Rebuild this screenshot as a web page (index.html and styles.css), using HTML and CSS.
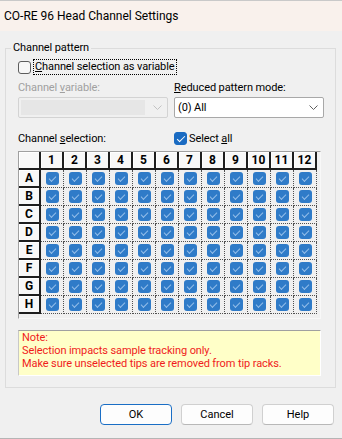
FILE: index.html
```html
<!DOCTYPE html>
<html lang="en">
<head>
    <meta charset="UTF-8">
    <meta name="viewport" content="width=device-width, initial-scale=1.0">
    <title>CO-RE 96 Head Channel Settings</title>
    <link rel="stylesheet" href="styles.css">
</head>
<body>
<div class="window">
    <div class="titlebar">CO-RE 96 Head Channel Settings</div>

    <fieldset class="group">
        <legend>Channel pattern</legend>

        <label class="check-row">
            <span class="check"></span>
            <span class="focus"><u>C</u>hannel selection as variable</span>
        </label>

        <div class="fields">
            <div class="field">
                <div class="field-label disabled">Channel <u>v</u>ariable:</div>
                <div class="combo disabled">
                    <span class="combo-text"></span>
                    <svg class="chevron" width="9" height="5" viewBox="0 0 9 5"><polyline points="0.5,0.5 4.5,4.5 8.5,0.5" fill="none" stroke="#c2c2c2" stroke-width="1"/></svg>
                </div>
            </div>
            <div class="field">
                <div class="field-label"><u>R</u>educed pattern mode:</div>
                <div class="combo">
                    <span class="combo-text">(0) All</span>
                    <svg class="chevron" width="9" height="5" viewBox="0 0 9 5"><polyline points="0.5,0.5 4.5,4.5 8.5,0.5" fill="none" stroke="#606060" stroke-width="1"/></svg>
                </div>
            </div>
        </div>

        <div class="fields selection-row">
            <span>Channel <u>s</u>election:</span>
            <label class="select-all"><span class="check checked"></span><span>Select <u>a</u>ll</span></label>
        </div>

        <div class="plate-frame">
            <div class="plate">
                <div class="hd corner"></div>
                <div class="hd">1</div><div class="hd">2</div><div class="hd">3</div><div class="hd">4</div>
                <div class="hd">5</div><div class="hd">6</div><div class="hd">7</div><div class="hd">8</div>
                <div class="hd">9</div><div class="hd">10</div><div class="hd">11</div><div class="hd">12</div>

                <div class="hd">A</div>
                <div class="cell"><i></i></div><div class="cell"><i></i></div><div class="cell"><i></i></div><div class="cell"><i></i></div>
                <div class="cell"><i></i></div><div class="cell"><i></i></div><div class="cell"><i></i></div><div class="cell"><i></i></div>
                <div class="cell"><i></i></div><div class="cell"><i></i></div><div class="cell"><i></i></div><div class="cell"><i></i></div>

                <div class="hd">B</div>
                <div class="cell"><i></i></div><div class="cell"><i></i></div><div class="cell"><i></i></div><div class="cell"><i></i></div>
                <div class="cell"><i></i></div><div class="cell"><i></i></div><div class="cell"><i></i></div><div class="cell"><i></i></div>
                <div class="cell"><i></i></div><div class="cell"><i></i></div><div class="cell"><i></i></div><div class="cell"><i></i></div>

                <div class="hd">C</div>
                <div class="cell"><i></i></div><div class="cell"><i></i></div><div class="cell"><i></i></div><div class="cell"><i></i></div>
                <div class="cell"><i></i></div><div class="cell"><i></i></div><div class="cell"><i></i></div><div class="cell"><i></i></div>
                <div class="cell"><i></i></div><div class="cell"><i></i></div><div class="cell"><i></i></div><div class="cell"><i></i></div>

                <div class="hd">D</div>
                <div class="cell"><i></i></div><div class="cell"><i></i></div><div class="cell"><i></i></div><div class="cell"><i></i></div>
                <div class="cell"><i></i></div><div class="cell"><i></i></div><div class="cell"><i></i></div><div class="cell"><i></i></div>
                <div class="cell"><i></i></div><div class="cell"><i></i></div><div class="cell"><i></i></div><div class="cell"><i></i></div>

                <div class="hd">E</div>
                <div class="cell"><i></i></div><div class="cell"><i></i></div><div class="cell"><i></i></div><div class="cell"><i></i></div>
                <div class="cell"><i></i></div><div class="cell"><i></i></div><div class="cell"><i></i></div><div class="cell"><i></i></div>
                <div class="cell"><i></i></div><div class="cell"><i></i></div><div class="cell"><i></i></div><div class="cell"><i></i></div>

                <div class="hd">F</div>
                <div class="cell"><i></i></div><div class="cell"><i></i></div><div class="cell"><i></i></div><div class="cell"><i></i></div>
                <div class="cell"><i></i></div><div class="cell"><i></i></div><div class="cell"><i></i></div><div class="cell"><i></i></div>
                <div class="cell"><i></i></div><div class="cell"><i></i></div><div class="cell"><i></i></div><div class="cell"><i></i></div>

                <div class="hd">G</div>
                <div class="cell"><i></i></div><div class="cell"><i></i></div><div class="cell"><i></i></div><div class="cell"><i></i></div>
                <div class="cell"><i></i></div><div class="cell"><i></i></div><div class="cell"><i></i></div><div class="cell"><i></i></div>
                <div class="cell"><i></i></div><div class="cell"><i></i></div><div class="cell"><i></i></div><div class="cell"><i></i></div>

                <div class="hd">H</div>
                <div class="cell"><i></i></div><div class="cell"><i></i></div><div class="cell"><i></i></div><div class="cell"><i></i></div>
                <div class="cell"><i></i></div><div class="cell"><i></i></div><div class="cell"><i></i></div><div class="cell"><i></i></div>
                <div class="cell"><i></i></div><div class="cell"><i></i></div><div class="cell"><i></i></div><div class="cell"><i></i></div>
            </div>
        </div>

        <div class="note">
            Note:<br>
            Selection impacts sample tracking only.<br>
            Make sure unselected tips are removed from tip racks.
        </div>
    </fieldset>

    <div class="buttons">
        <button class="btn default">OK</button>
        <button class="btn">Cancel</button>
        <button class="btn">Help</button>
    </div>
</div>
</body>
</html>
```

FILE: styles.css
```css
* {
    box-sizing: border-box;
}
body {
    margin: 0;
    background-color: #f0f0f0;
    font-family: "Segoe UI", Roboto, "Liberation Sans", sans-serif;
    font-size: 11px;
    letter-spacing: -0.1px;
    color: #000;
}
u {
    text-underline-offset: 1px;
}
.window {
    width: 342px;
    height: 439px;
    border-top: 1px solid #c9c9c9;
    border-bottom: 1px solid #b5b5b5;
}
.titlebar {
    height: 30px;
    line-height: 30px;
    padding-left: 4px;
    font-size: 12px;
    letter-spacing: 0;
    background-color: #f9f1ec;
}
.group {
    margin: 10px 6px 0 5px;
    padding: 4px 12px 11px 12px;
    border: 1px solid #dcdcdc;
    min-width: 0;
}
.group legend {
    margin-left: -7px;
    padding: 0 2px;
    line-height: 14px;
}
.check-row {
    display: flex;
    align-items: center;
    gap: 2px;
    height: 16px;
}
.check {
    width: 13px;
    height: 13px;
    border: 1px solid #5d5d5d;
    border-radius: 3px;
    background: #f7f7f7;
    display: flex;
    align-items: center;
    justify-content: center;
}
.check.checked {
    border-color: #1a6bc2;
    background: #1a6bc2;
}
.check.checked::after {
    content: "";
    width: 7px;
    height: 3px;
    border-left: 1.5px solid #fff;
    border-bottom: 1.5px solid #fff;
    transform: translateY(-1px) rotate(-45deg);
}
.focus {
    border: 1px dotted #000;
    padding: 0 1px;
    line-height: 14px;
}
.fields {
    display: grid;
    grid-template-columns: 150px 150px;
    column-gap: 6px;
    margin-top: 5px;
}
.field-label {
    line-height: 15px;
}
.field-label.disabled {
    color: #a0a0a0;
}
.combo {
    display: flex;
    align-items: center;
    height: 21px;
    margin-top: 2px;
    border: 1px solid #a8a8a8;
    border-radius: 2px;
    background: #fff;
    padding: 0 5px 0 3px;
}
.combo-text {
    flex: 1;
    line-height: 19px;
}
.combo.disabled {
    border-color: #d3d3d3;
    background: #f0f0f0;
    padding: 2px 5px 2px 2px;
}
.combo.disabled .combo-text {
    align-self: stretch;
    background: #e6e6e6;
    margin-right: 8px;
}
.selection-row {
    margin-top: 13px;
    height: 15px;
    align-items: center;
}
.select-all {
    display: flex;
    align-items: center;
    gap: 2px;
}
.plate-frame {
    margin-top: 5px;
    width: 303px;
    padding: 0 3px 4px 0;
    border: 1px solid;
    border-color: #a0a0a0 #f8f8f8 #f8f8f8 #a0a0a0;
}
.plate {
    display: grid;
    grid-template-columns: 22px repeat(12, 23px);
    grid-auto-rows: 18px;
}
.hd {
    display: flex;
    align-items: center;
    justify-content: center;
    font-size: 12px;
    font-weight: bold;
    letter-spacing: 0;
    background: #f8f8f8;
    border-right: 2px solid #1e1e1e;
    border-bottom: 2px solid #1e1e1e;
    box-shadow: inset 1px 1px #fff;
}
.cell {
    display: flex;
    align-items: center;
    justify-content: center;
    border-right: 1px dotted #505050;
    border-bottom: 1px dotted #505050;
}
.cell i {
    width: 13px;
    height: 13px;
    border-radius: 3px;
    background: #2f7bc8;
    display: flex;
    align-items: center;
    justify-content: center;
}
.cell i::after {
    content: "";
    width: 6px;
    height: 3px;
    border-left: 1px solid #93bde9;
    border-bottom: 1px solid #93bde9;
    transform: translateY(-1px) rotate(-45deg);
}
.note {
    margin-top: 11px;
    width: 303px;
    height: 46px;
    padding: 0 3px;
    line-height: 13px;
    color: #f01c1c;
    background: #ffffc8;
    border: 1px solid;
    border-color: #a0a0a0 #fff #fff #c8c8c8;
}
.buttons {
    display: flex;
    justify-content: flex-end;
    gap: 9px;
    margin-top: 16px;
    padding-right: 8px;
}
.btn {
    width: 72px;
    height: 21px;
    padding: 0;
    font-family: inherit;
    font-size: 11px;
    color: #000;
    background: #fdfdfd;
    border: 1px solid #d0d0d0;
    border-bottom-color: #b8b8b8;
    border-radius: 4px;
}
.btn.default {
    border-color: #1a6ec5;
}
```
